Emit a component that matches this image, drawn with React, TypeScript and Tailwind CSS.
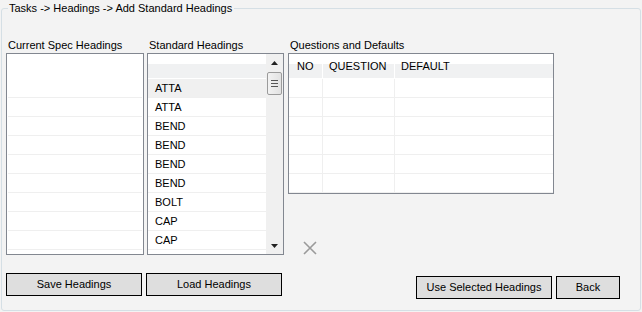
const standard = ["ATTA", "ATTA", "BEND", "BEND", "BEND", "BEND", "BOLT", "CAP", "CAP", ""];

const Header = () => (
  <div className="h-[25px] flex flex-col">
    <div className="h-[10px] bg-white" />
    <div className="h-[14px] bg-[#f0f1f2]" />
    <div className="h-[1px] bg-white" />
  </div>
);

const Scrollbar = () => (
  <div className="w-[17px] h-full bg-[#f0f0f0] flex flex-col">
    <div className="h-[17px] flex items-center justify-center">
      <svg width="7" height="4" viewBox="0 0 7 4">
        <path d="M3.5 0 L7 4 L0 4 Z" fill="#222" />
      </svg>
    </div>
    <div className="mx-[1px] mt-[1px] h-[23px] rounded-[2px] border border-[#9b9b9b] bg-[linear-gradient(90deg,#f2f2f2,#e2e2e2)] flex flex-col items-center justify-center gap-[2px]">
      <div className="w-[7px] h-[1px] bg-[#555]" />
      <div className="w-[7px] h-[1px] bg-[#555]" />
      <div className="w-[7px] h-[1px] bg-[#555]" />
    </div>
    <div className="flex-1" />
    <div className="h-[17px] flex items-center justify-center">
      <svg width="7" height="4" viewBox="0 0 7 4">
        <path d="M0 0 L7 0 L3.5 4 Z" fill="#222" />
      </svg>
    </div>
  </div>
);

const Button = ({ label, w }: { label: string; w: string }) => (
  <button className={`${w} h-[23px] border border-black bg-[#dedede] text-[11px] text-black leading-none`}>
    {label}
  </button>
);

export default function App() {
  return (
    <div className="w-[642px] h-[312px] bg-[#f3f3f3] text-[11px] text-black font-['Liberation_Sans',Arial,sans-serif]">
      <fieldset className="ml-[1px] w-[640px] h-[311px] border border-[#d5dfe5] rounded-[3px] px-[4px]">
        <legend className="ml-[2px] pl-[1px] pr-[2px] leading-[16px]">
          Tasks -&gt; Headings -&gt; Add Standard Headings
        </legend>

        <div className="mt-[21px] flex items-start">
          <div className="w-[138px] flex flex-col">
            <div className="h-[16px] leading-[16px] pl-[2px]">Current Spec Headings</div>
            <div className="h-[202px] border border-[#828790] bg-white overflow-hidden">
              <div className="h-[25px]" />
              {Array.from({ length: 9 }).map((_, i) => (
                <div key={i} className="h-[19px] mx-[1px] border-b border-[#efefef]" />
              ))}
            </div>
          </div>

          <div className="ml-[3px] w-[137px] flex flex-col">
            <div className="h-[16px] leading-[16px] pl-[2px]">Standard Headings</div>
            <div className="h-[202px] border border-[#828790] bg-white overflow-hidden flex">
              <div className="flex-1 overflow-hidden">
                <Header />
                {standard.map((s, i) => (
                  <div
                    key={i}
                    className={`h-[19px] border-b border-[#efefef] pl-[7px] leading-[18px] ${i === 0 ? "bg-[#f0f0f0]" : ""}`}
                  >
                    {s}
                  </div>
                ))}
              </div>
              <Scrollbar />
            </div>
          </div>

          <div className="ml-[4px] w-[266px] flex flex-col">
            <div className="h-[16px] leading-[16px] pl-[2px]">Questions and Defaults</div>
            <div className="h-[141px] border border-[#828790] bg-white overflow-hidden">
              <div className="h-[25px] flex bg-[linear-gradient(#ffffff_0,#ffffff_40%,#f0f1f2_40%,#f0f1f2_96%,#ffffff_96%)]">
                <div className="w-[34px] border-r border-white pl-[8px] leading-[25px]">NO</div>
                <div className="w-[72px] border-r border-white pl-[6px] leading-[25px]">QUESTION</div>
                <div className="flex-1 pl-[6px] leading-[25px]">DEFAULT</div>
              </div>
              {Array.from({ length: 6 }).map((_, i) => (
                <div key={i} className="h-[19px] flex border-b border-[#efefef]">
                  <div className="w-[34px] border-r border-[#efefef]" />
                  <div className="w-[72px] border-r border-[#efefef]" />
                  <div className="flex-1" />
                </div>
              ))}
            </div>
            {/* delete icon */}
            <svg className="mt-[47px] ml-[15px]" width="14" height="14" viewBox="0 0 14 14">
              <path d="M1 1 L13 13 M13 1 L1 13" stroke="#9a9a9a" strokeWidth="1.6" />
            </svg>
          </div>
        </div>

        <div className="mt-[18px] flex items-start">
          <div className="flex gap-[4px]">
            <Button label="Save Headings" w="w-[136px]" />
            <Button label="Load Headings" w="w-[136px]" />
          </div>
          <div className="ml-auto mr-[16px] mt-[3px] flex gap-[4px]">
            <Button label="Use Selected Headings" w="w-[136px]" />
            <Button label="Back" w="w-[64px]" />
          </div>
        </div>
      </fieldset>
    </div>
  );
}
